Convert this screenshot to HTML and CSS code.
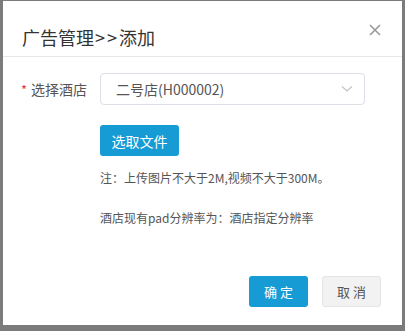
FILE: index.html
```html
<!DOCTYPE html>
<html lang="zh">
<head>
<meta charset="utf-8">
<link rel="stylesheet" href="styles.css">
</head>
<body>
<div class="dialog">
  <div class="header">
    <div class="title">广告管理<span class="sep">&gt;&gt;</span>添加</div>
    <span class="close"><svg width="12" height="12" viewBox="0 0 12 12"><path d="M1 1L11 11M11 1L1 11" stroke="#999" stroke-width="1.6"/></svg></span>
  </div>
  <div class="body">
    <div class="row">
      <div class="label"><span class="req">*</span>选择酒店</div>
      <div class="select">
        <span>二号店(H000002)</span>
        <svg class="arrow" width="12" height="8" viewBox="0 0 12 8"><path d="M1 1.5L6 6L11 1.5" fill="none" stroke="#c0c4cc" stroke-width="1.2"/></svg>
      </div>
    </div>
    <div class="content">
      <div class="btn primary file">选取文件</div>
      <div class="note">注：上传图片不大于2M,视频不大于300M。</div>
      <div class="note second">酒店现有pad分辨率为：酒店指定分辨率</div>
    </div>
  </div>
  <div class="footer">
    <div class="btn primary">确 定</div>
    <div class="btn default">取 消</div>
  </div>
</div>
</body>
</html>
```
FILE: styles.css
```css
html, body {
  margin: 0;
  padding: 0;
  background: #7b7b7b;
  width: 405px;
  height: 331px;
  overflow: hidden;
  font-family: "Noto Sans CJK SC", "Noto Sans", sans-serif;
}
.dialog {
  margin: 1px 3px 0 3px;
  width: 399px;
  height: 324px;
  background: #fff;
  display: flex;
  flex-direction: column;
  box-sizing: border-box;
}
.header {
  height: 55px;
  border-bottom: 1px solid #e8e8e8;
  display: flex;
  justify-content: space-between;
  align-items: flex-start;
  padding: 0 21px 0 19px;
}
.title {
  margin-top: 23px;
  font-size: 18px;
  line-height: 26px;
  color: #333;
}
.sep {
  letter-spacing: 2px;
  padding-left: 1px;
}
.close {
  margin-top: 23px;
  display: flex;
}
.body {
  flex: 1;
  padding: 16px 37px 0 18px;
}
.row {
  display: flex;
  align-items: center;
  height: 32px;
}
.label {
  width: 79px;
  font-size: 14px;
  color: #555;
  display: flex;
  align-items: center;
}
.req {
  color: #e4393c;
  margin-right: 4px;
  font-size: 13px;
}
.select {
  flex: 1;
  height: 32px;
  box-sizing: border-box;
  border: 1px solid #dcdfe6;
  border-radius: 4px;
  display: flex;
  align-items: center;
  justify-content: space-between;
  padding: 0 11px 0 15px;
  font-size: 14px;
  color: #555;
}
.content {
  padding-left: 79px;
  padding-top: 20px;
}
.btn {
  display: inline-flex;
  align-items: center;
  justify-content: center;
  height: 31px;
  box-sizing: border-box;
  border-radius: 3px;
  font-size: 13px;
}
.primary {
  background: #169bd5;
  color: #fff;
}
.file {
  width: 79px;
  font-size: 14px;
}
.note {
  margin-top: 13px;
  font-size: 12px;
  line-height: 18px;
  color: #555;
}
.note.second {
  margin-top: 22px;
}
.footer {
  display: flex;
  justify-content: flex-end;
  gap: 14px;
  padding: 0 21px 18px 0;
}
.footer .btn {
  width: 59px;
}
.default {
  background: #f2f2f2;
  border: 1px solid #e4e4e4;
  color: #555;
}
```
